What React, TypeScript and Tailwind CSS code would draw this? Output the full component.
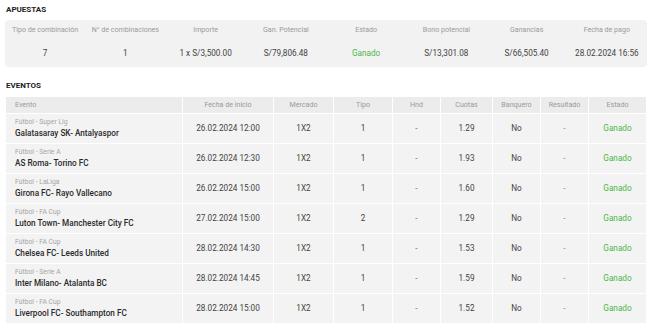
const resumen = [
  { label: 'Tipo de combinación', value: '7' },
  { label: 'N° de combinaciones', value: '1' },
  { label: 'Importe', value: '1 x S/3,500.00' },
  { label: 'Gan. Potencial', value: 'S/79,806.48' },
  { label: 'Estado', value: 'Ganado', win: true },
  { label: 'Bono potencial', value: 'S/13,301.08' },
  { label: 'Ganancias', value: 'S/66,505.40' },
  { label: 'Fecha de pago', value: '28.02.2024 16:56' },
];

const eventos = [
  { liga: 'Fútbol - Super Lig', partido: 'Galatasaray SK- Antalyaspor', fecha: '26.02.2024 12:00', tipo: '1', cuota: '1.29' },
  { liga: 'Fútbol - Serie A', partido: 'AS Roma- Torino FC', fecha: '26.02.2024 12:30', tipo: '1', cuota: '1.93' },
  { liga: 'Fútbol - LaLiga', partido: 'Girona FC- Rayo Vallecano', fecha: '26.02.2024 15:00', tipo: '1', cuota: '1.60' },
  { liga: 'Fútbol - FA Cup', partido: 'Luton Town- Manchester City FC', fecha: '27.02.2024 15:00', tipo: '2', cuota: '1.29' },
  { liga: 'Fútbol - FA Cup', partido: 'Chelsea FC- Leeds United', fecha: '28.02.2024 14:30', tipo: '1', cuota: '1.53' },
  { liga: 'Fútbol - Serie A', partido: 'Inter Milano- Atalanta BC', fecha: '28.02.2024 14:45', tipo: '1', cuota: '1.59' },
  { liga: 'Fútbol - FA Cup', partido: 'Liverpool FC- Southampton FC', fecha: '28.02.2024 15:00', tipo: '1', cuota: '1.52' },
];

const cols = [
  { name: 'Evento', w: 'w-[177px]', left: true },
  { name: 'Fecha de inicio', w: 'w-[91px]' },
  { name: 'Mercado', w: 'w-[60px]' },
  { name: 'Tipo', w: 'w-[59px]' },
  { name: 'Hnd', w: 'w-[48px]' },
  { name: 'Cuotas', w: 'w-[52px]' },
  { name: 'Banquero', w: 'w-[48px]' },
  { name: 'Resultado', w: 'w-[48px]' },
  { name: 'Estado', w: 'w-[58px]' },
];

export default function App() {
  return (
    <div className="w-[652px] h-[328px] bg-white px-[5px] pt-[5px] font-['Roboto',sans-serif] text-[#333] overflow-hidden">
      <h2 className="text-[8px] font-bold text-[#222] leading-[10px] mb-[5px] ml-px">APUESTAS</h2>

      {/* resumen de la apuesta */}
      <div className="w-[642px] h-[47px] bg-[#f2f2f2] rounded-[4px] grid grid-cols-8">
        {resumen.map((r) => (
          <div key={r.label} className="flex flex-col items-center">
            <div className="h-[19px] pt-[2px] flex items-center text-[7.1px] text-[#9a9a9a] whitespace-nowrap">{r.label}</div>
            <div className={`h-[28px] flex items-center text-[8.2px] ${r.win ? 'text-[#4cb848]' : 'text-[#444]'}`}>
              {r.value}
            </div>
          </div>
        ))}
      </div>

      <h2 className="text-[8px] font-bold text-[#222] leading-[10px] mt-[14px] mb-[5px] ml-px">EVENTOS</h2>

      <table className="w-[641px] border-collapse table-fixed">
        <thead>
          <tr className="bg-[#ececec] h-[17px]">
            {cols.map((c) => (
              <th
                key={c.name}
                className={`${c.w} border border-white p-0 font-normal text-[7.1px] text-[#9a9a9a] ${c.left ? 'text-left pl-[9px]' : 'text-center'}`}
              >
                {c.name}
              </th>
            ))}
          </tr>
        </thead>
        <tbody>
          {eventos.map((e) => (
            <tr key={e.partido} className="bg-[#f3f3f3] h-[30px] text-[8.2px]">
              <td className="border border-white pl-[9px] p-0 align-middle">
                <div className="text-[6.8px] text-[#a5a5a5] leading-[10px]">{e.liga}</div>
                <div className="text-[8.2px] font-medium text-[#2a2a2a] leading-[13px]">{e.partido}</div>
              </td>
              <td className="border border-white text-center text-[#444]">{e.fecha}</td>
              <td className="border border-white text-center text-[#444]">1X2</td>
              <td className="border border-white text-center text-[#444]">{e.tipo}</td>
              <td className="border border-white text-center text-[#777]">-</td>
              <td className="border border-white text-center text-[#444]">{e.cuota}</td>
              <td className="border border-white text-center text-[#444]">No</td>
              <td className="border border-white text-center text-[#4cb848]">-</td>
              <td className="border border-white text-center text-[#4cb848]">Ganado</td>
            </tr>
          ))}
        </tbody>
      </table>
    </div>
  );
}
